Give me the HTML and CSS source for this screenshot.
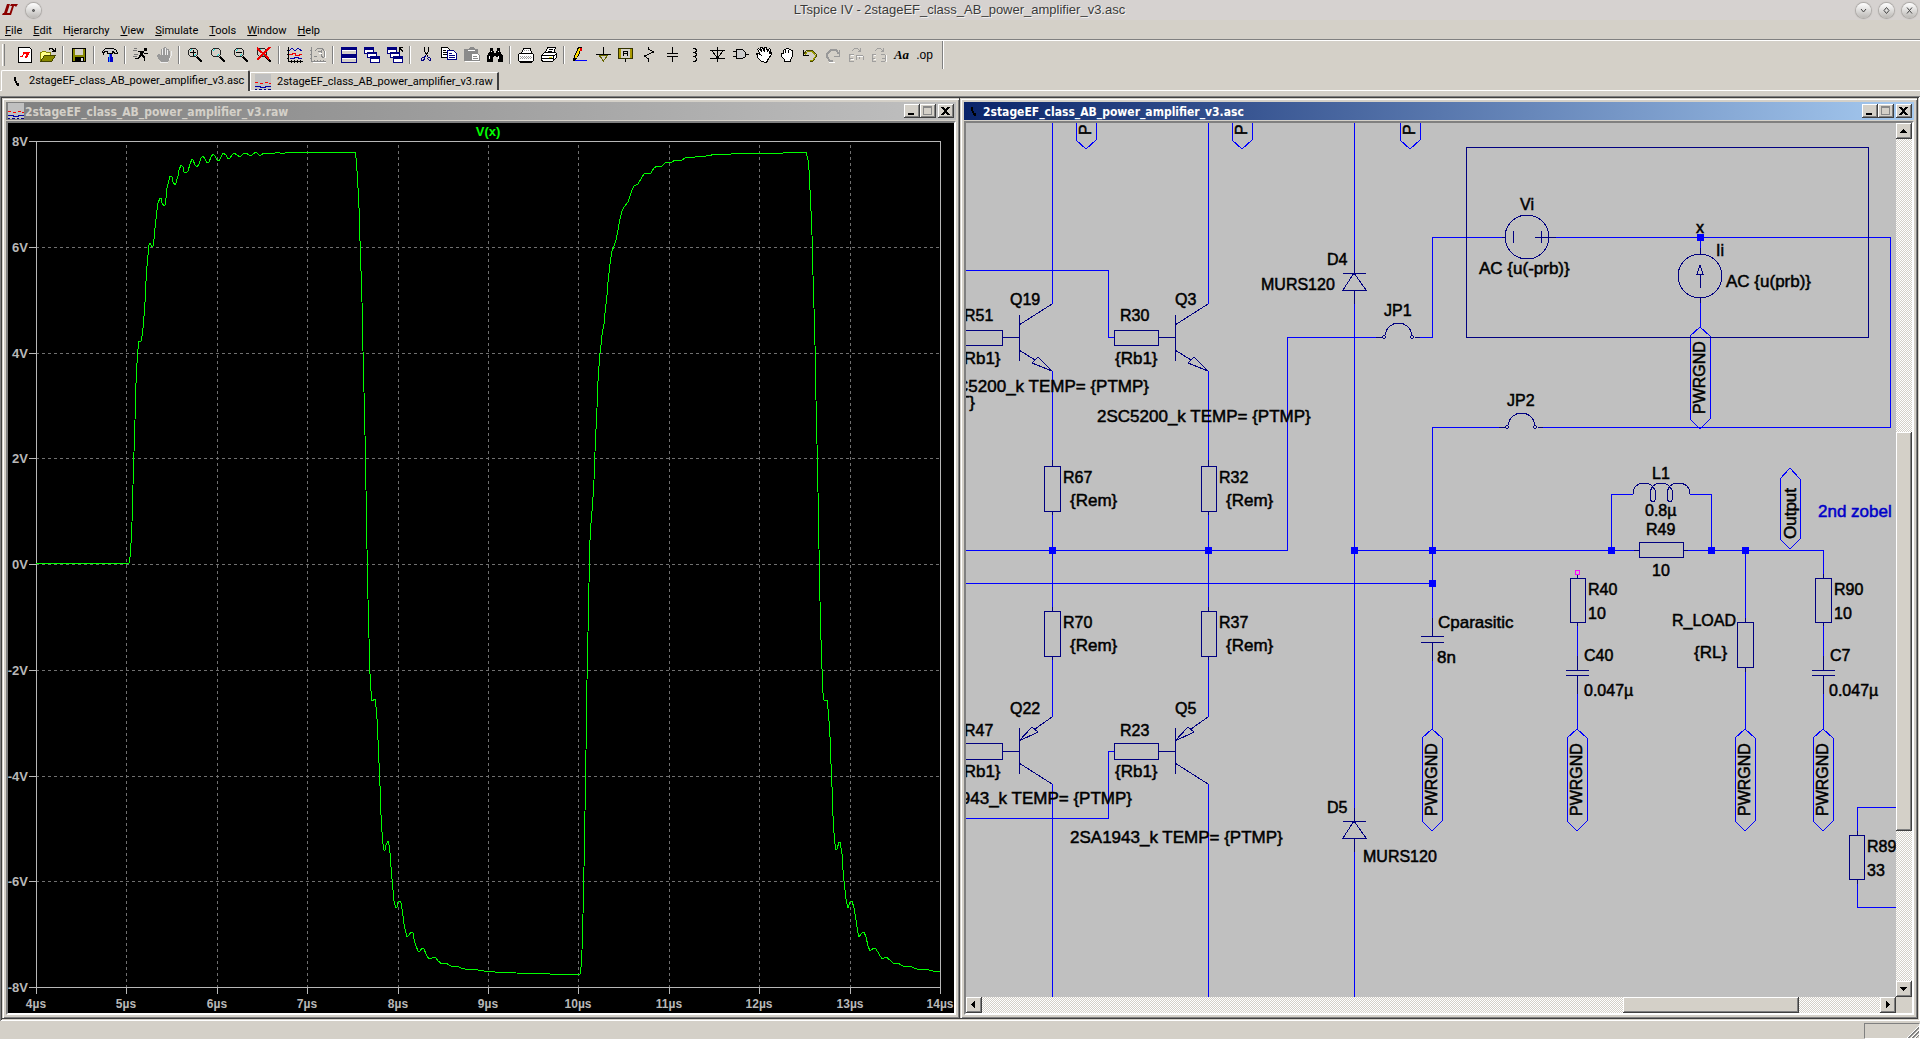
FILE: index.html
```html
<!DOCTYPE html>
<html lang="en">
<head>
<meta charset="utf-8">
<title>LTspice IV - 2stageEF_class_AB_power_amplifier_v3.asc</title>
<link rel="stylesheet" href="styles.css">
</head>
<body>
<header class="titlebar">
  <div class="titlebar-side">
    <svg class="logo" viewBox="0 0 16 12" aria-hidden="true"><path fill="#8b0000" d="M5 0h3L5 9h4l-1 2H0l1-2h1zM9 0h7l-2 3-1-1h-1L9 11H7l3-9H8z"/></svg>
    <button class="orb" aria-label="Window menu"><svg viewBox="0 0 15 15"><circle cx="7.500" cy="7.500" r="1" fill="#777"/></svg></button>
  </div>
  <h1>LTspice IV - 2stageEF_class_AB_power_amplifier_v3.asc</h1>
  <div class="titlebar-side end">
    <button class="orb" aria-label="Minimize"><svg viewBox="0 0 15 15"><path d="M5 6l2.500 3L10 6"/></svg></button>
    <button class="orb" aria-label="Maximize"><svg viewBox="0 0 15 15"><path d="M7.500 4.500l2.500 3-2.500 3-2.500-3z"/></svg></button>
    <button class="orb" aria-label="Close"><svg viewBox="0 0 15 15"><path d="M5 4.500l5 6M10 4.500l-5 6"/></svg></button>
  </div>
</header>

<nav class="menubar">
  <button><u>F</u>ile</button><button><u>E</u>dit</button><button>H<u>i</u>erarchy</button><button><u>V</u>iew</button><button><u>S</u>imulate</button><button><u>T</u>ools</button><button><u>W</u>indow</button><button><u>H</u>elp</button>
</nav>

<div class="toolbar" role="toolbar">
  <button aria-label="New schematic"><svg viewBox="0 0 16 16"><path d="M1.500.5h11l2 2v13h-13z" fill="#fff" stroke="#000"/><path d="M6 5h7l-1 2-2 4H8l1-4H7l-1 3H3V9h2l1-2z" fill="#f00"/></svg></button>
  <button aria-label="Open"><svg viewBox="0 0 16 16"><path d="M.5 14.500v-9h1l1-1h3l1 1h4v3" fill="#ff8" stroke="#880"/><path d="M.5 14.500l4-6h11l-4 6z" fill="#880" stroke="#440"/><path d="M8.500 2.500h1v-1h3v1h1v1h1M15.500 1v3.500H12" fill="none" stroke="#000"/></svg></button>
  <span class="sep"></span>
  <button aria-label="Save"><svg viewBox="0 0 16 16"><path d="M1.500 1.500h13v13h-13z" fill="#880" stroke="#000"/><path d="M4 2h8v6H4z" fill="#d4d0c8"/><path d="M4 10h9v5H4z" fill="#000"/><path d="M10 11h2v3h-2z" fill="#ddd"/></svg></button>
  <span class="sep"></span>
  <button aria-label="Control panel"><svg viewBox="0 0 16 16"><path d="M.5 4.500l3-3h8l3 2 1 3h-3l-1-2h-1v2h-5v-2h-3l-1 2z" fill="#ccc" stroke="#000"/><path d="M7 7h3v3h1v5H6v-5h1z" fill="#00c"/><path d="M7 7h1v8H7z" fill="#39f"/></svg></button>
  <span class="sep"></span>
  <button aria-label="Run"><svg viewBox="0 0 16 16"><path d="M11 1h3v3h-3zM6 4h5v2h-1v2l2 2v4h-1v-3L8 9l-2 3H2v-1h3l2-4V5H5V4zM11 6h4v1h-4z" fill="#000"/><path d="M1 1.500h3M0 3.500h4M1 7.500h4M0 9.500h4" stroke="#777"/></svg></button>
  <button aria-label="Halt" disabled><svg viewBox="0 0 16 16"><path d="M5 15L2 11 1 8l2-1 2 2V2h1.500V1H8V0h1.500v1H11v1h1.500v2H14v7l-2 4z" fill="#999"/><path d="M6.500 2v6M9 1v7M11.500 3v5M4 15.500h8M13 13l2-4V4" stroke="#eee" fill="none"/></svg></button>
  <span class="sep"></span>
  <button aria-label="Zoom in"><svg viewBox="0 0 16 16"><use href="#lens"/><path d="M3 5.500h6M6 3v6" stroke="#000"/></svg></button>
  <button aria-label="Zoom"><svg viewBox="0 0 16 16"><g id="lens"><circle cx="6" cy="5.500" r="4.500" fill="none" stroke="#222"/><path d="M3 4l2-2M7 9l2-2" stroke="#0dd" stroke-width="1"/><path d="M10 10l5 5" stroke="#000" stroke-width="2"/></g></svg></button>
  <button aria-label="Zoom out"><svg viewBox="0 0 16 16"><use href="#lens"/><path d="M3 5.500h6" stroke="#000"/></svg></button>
  <button aria-label="Zoom to fit"><svg viewBox="0 0 16 16"><use href="#lens"/><path d="M1 1l12 11M14 0L1 13" stroke="#e00" stroke-width="2"/></svg></button>
  <span class="sep"></span>
  <button aria-label="Autorange"><svg viewBox="0 0 16 16"><path d="M1.500 0v14.500H16M4 13v3M7 13v3M10 13v3M13 13v3M0 3.500h2M0 7.500h2M0 11.500h2" stroke="#000" fill="none"/><path d="M2 4l3-3 3 3 3-3 4 3" stroke="#00a" fill="none"/><path d="M2 7.500h3v-1h3v2h4v-1h3" stroke="#e00" fill="none"/><path d="M3 11.500h4v-1h4v1h4" stroke="#00a" fill="none"/></svg></button>
  <button aria-label="Plot settings" disabled><svg viewBox="0 0 16 16"><path d="M1.500 0v14.500H16M4 13v3M7 13v3M10 13v3M13 13v3M0 3.500h2M0 7.500h2M0 11.500h2M5 4l3-3h4l2 3v6M8 5l3-1v5l3 2M4 9h3" stroke="#8a8a8a" fill="none"/><path d="M3 15.500h13M9 6h3M15.500 4v7" stroke="#fff"/></svg></button>
  <span class="sep"></span>
  <button aria-label="Tile windows"><svg viewBox="0 0 16 16"><path d="M.5.500h15v7H.5zM.5 8.500h15v7H.5z" fill="#d4d0c8" stroke="#000080"/><path d="M1 1h14v2H1zM1 9h14v2H1z" fill="#000080"/><path d="M1 3h14v1H1zM1 11h14v1H1z" fill="#fff"/></svg></button>
  <button aria-label="Cascade windows"><svg viewBox="0 0 16 16"><g id="cascade" fill="#fff" stroke="#000080"><path d="M.5.500h9v6h-9zM3.500 5h9v5h-9zM6.500 9h9v6h-9z"/><path d="M1 2h9M3 6h10M6 10.500h10" stroke-width="2"/></g></svg></button>
  <button aria-label="Close windows"><svg viewBox="0 0 16 16"><use href="#cascade"/><path d="M12.500 5V.5H16M13 1l3 4" stroke="#000" fill="none"/></svg></button>
  <span class="sep"></span>
  <button aria-label="Cut"><svg viewBox="0 0 16 16"><path d="M6.500 0v4l3 5M10.500 0v4l-3 5" stroke="#000" fill="none"/><path d="M4.500 10.500h2l1-2M4.500 10.500l-1 1v2h2l1-2v-1M9.500 9l1 1.500h1l1 1v2h-1l-2-2v-1" stroke="#000080" fill="none"/></svg></button>
  <button aria-label="Copy"><svg viewBox="0 0 16 16"><path d="M.5.500h6l3 3v7h-9z" fill="#fff" stroke="#000"/><path d="M2 3.500h3M2 5.500h5M2 7.500h5" stroke="#000"/><path d="M6.500 3.500h6l3 3v6h-9z" fill="#fff" stroke="#000080"/><path d="M8 8.500h6M8 10.500h6M8 6.500h3" stroke="#000080"/></svg></button>
  <button aria-label="Paste" disabled><svg viewBox="0 0 16 16"><path d="M0 2h4l2-2h3l2 2h3v5H7v7H0z" fill="#8a8a8a"/><path d="M7.500 6.500h6l2 2v5h-8z" fill="#fff" stroke="#8a8a8a"/><path d="M9 9.500h4M9 11.500h5" stroke="#8a8a8a"/><path d="M4 3.500h7M1 14.500h15" stroke="#fff"/></svg></button>
  <button aria-label="Find"><svg viewBox="0 0 16 16"><path d="M3 1h3v3h1v2h2V4h1V1h3v3l3 5v6h-5v-5H9v-1H7v1H6v5H0V9l3-5z" fill="#000"/><path d="M4.500 4v1M11.500 4v1M2.500 9v3M11.500 9v3" stroke="#fff"/></svg></button>
  <span class="sep"></span>
  <button aria-label="Print preview"><svg viewBox="0 0 16 16"><path d="M3.500 6.500l2-5h7l1 5" fill="#fff" stroke="#000"/><path d="M.5 7.500l1-1h13l1 1v6l-1 1h-13l-1-1z" fill="#fff" stroke="#000"/><path d="M2 9.500h12M2 11.500h12" stroke="#999" stroke-dasharray="1 1"/><path d="M3 10.500h12M6 3.500h5" stroke="#999" stroke-dasharray="1 1"/><path d="M2 14.500h12" stroke="#000" stroke-width="2"/></svg></button>
  <button aria-label="Print"><svg viewBox="0 0 16 16"><path d="M4.500 5.500l2-5h8l-2 6" fill="#fff" stroke="#000"/><path d="M.5 8.500l3-3h11l1 1v4l-4 4h-10l-1-2z" fill="#fff" stroke="#000"/><path d="M1 8.500h11M1 11.500h11M12.500 8v6M8 2.500h4M7 4.500h4M13 9l2-2" stroke="#000"/><path d="M8 10h3" stroke="#dd0"/></svg></button>
  <span class="sep"></span>
  <button aria-label="Wire"><svg viewBox="0 0 16 16"><path d="M6.500.5h3l-4 10-4 3 1-4z" fill="#fd0" stroke="#000"/><path d="M8 1h2v3H8z" fill="#e00"/><path d="M1 13.500h14" stroke="#00f"/><path d="M1 11h2v3H1z"/></svg></button>
  <button aria-label="Ground"><svg viewBox="0 0 16 16"><path d="M8.500 0v7M1 7.500h15" stroke="#000"/><path d="M4 8l4.500 6L13 8z" fill="#d4d0c8" stroke="#660"/></svg></button>
  <button aria-label="Label net"><svg viewBox="0 0 16 16"><path d="M.5 1.500h14v10H.5z" fill="#d4d0c8" stroke="#330"/><path d="M2 2v9M13 2v9" stroke="#a90" stroke-width="2"/><path d="M7.500 12v3M5.500 9V4.500h4V9M6 6.500h3" stroke="#000" fill="none"/></svg></button>
  <button aria-label="Resistor"><svg viewBox="0 0 16 16"><path d="M7.500 0v2l5 3-9 4 4 3v3" stroke="#000" fill="none"/></svg></button>
  <button aria-label="Capacitor"><svg viewBox="0 0 16 16"><path d="M8.500 0v6M3 6.500h11M3 9.500h11M8.500 10v5" stroke="#000"/></svg></button>
  <button aria-label="Inductor"><svg viewBox="0 0 16 16"><path d="M6 1.500h2q3 2 0 4H6h2q3 2 0 4H6h2q3 3 0 5H6" stroke="#000" fill="none"/></svg></button>
  <button aria-label="Diode"><svg viewBox="0 0 16 16"><path d="M7.500 0v15M0 3.500h15M0 11.500h15M2 4l5.500 7L13 4" stroke="#000" fill="none"/></svg></button>
  <button aria-label="Component"><svg viewBox="0 0 16 16"><path d="M0 4.500h3M0 9.500h3M13 7.500h3M3.500 2.500h6l3 3v4l-3 2h-6z" stroke="#000" fill="#ccc"/></svg></button>
  <button aria-label="Move"><svg viewBox="0 0 16 16"><path d="M5.500 14.500l-4-4v-2l-1-2h2l2 1-3-5 1-1 3 3-1-4h2l2 4V.5h2l1 4 2-3 1 1-1 4 2-1v2l-3 4-2 4z" fill="#fff" stroke="#000"/></svg></button>
  <button aria-label="Drag"><svg viewBox="0 0 16 16"><path d="M5.500 14.500v-2l-3-3v-3h2v-3l1-1h1l1-1h2l1 1h1l1 1h1v6l-2 3v2z" fill="#fff" stroke="#000"/><path d="M6.500 3v3M9.500 3v3" stroke="#000"/></svg></button>
  <button aria-label="Undo"><svg viewBox="0 0 16 16"><path d="M2 7l3-4h5l4 4v3l-3 4H8" fill="none" stroke="#440"/><path d="M3 8l3-4h4l3 4v2l-2 3H8" fill="none" stroke="#990"/><path d="M1.500 3v5H7" fill="none" stroke="#000"/></svg></button>
  <button aria-label="Redo" disabled><svg viewBox="0 0 16 16"><path d="M14 7l-3-4H6L2 7v3l3 4h3" fill="none" stroke="#999" stroke-width="2"/><path d="M14.500 3v6H9" fill="none" stroke="#999"/><path d="M4 15.500h6" stroke="#fff"/></svg></button>
  <button aria-label="Rotate" disabled><svg viewBox="0 0 18 16"><path d="M4 3.500l3-3h4l3 3M14.500 0v4H11M1 7.500h6M1 11.500h5M1 15h6M2 8v7M9 8.500h8M9.500 9v5M13 9v4M17 9v5" stroke="#999" fill="none"/><path d="M3 12.500h4M3 8.500h4M10 9.500h7" stroke="#fff"/></svg></button>
  <button aria-label="Mirror" disabled><svg viewBox="0 0 18 16"><path d="M4 3.500l3-3h4l3 3M14.500 0v4H11M1 7.500h5M1 11.500h4M1 15h5M2 8v7M11 7.500h5M12 11.500h4M11 15h5M16 8v7" stroke="#999" fill="none"/><path d="M3 12.500h3M3 8.500h3M17.500 8v8" stroke="#fff"/></svg></button>
  <button class="glyph-text">Aa</button>
  <button class="glyph-op">.op</button>
  <span class="toolbar-end"></span>
</div>

<div class="tabs" role="tablist">
  <button class="tab active" role="tab" aria-selected="true"><svg viewBox="0 0 16 16"><path d="M7 4h2v4h1v2h2v3h-2v-1H9v-2H8V8H7z"/></svg>2stageEF_class_AB_power_amplifier_v3.asc</button>
  <button class="tab" role="tab" aria-selected="false"><svg viewBox="0 0 16 16"><g id="wave"><path d="M0 0h16v16H0z" fill="#c0c0c0"/><path d="M0 8.500h3M5 9.500h3M10 8.500h3M14 9.500h2" stroke="#f00"/><path d="M0 12.500h5v1h5v-1h6" stroke="#00a" fill="none"/><path d="M0 15.500h2M4 15.500h3M9 15.500h2M13 15.500h3" stroke="#000080"/></g></svg>2stageEF_class_AB_power_amplifier_v3.raw</button>
</div>

<main class="workspace">
  <section class="window">
    <div class="caption">
      <svg class="caption-icon" viewBox="0 0 16 16"><use href="#wave"/></svg>
      <h2>2stageEF_class_AB_power_amplifier_v3.raw</h2>
      <button class="cap" aria-label="Minimize"><svg viewBox="0 0 12 10"><path d="M2 8h6" stroke="#000" stroke-width="2"/></svg></button>
      <button class="cap" aria-label="Maximize"><svg viewBox="0 0 12 10"><path d="M1.500.5h8v8h-8zM1 1.500h9" stroke="#888" fill="none"/></svg></button>
      <button class="cap close" aria-label="Close"><svg viewBox="0 0 12 10"><path d="M2 1l7 8M9 1L2 9" stroke="#000" stroke-width="2"/></svg></button>
    </div>
    <div class="client plot">
      <svg class="canvas" viewBox="8 123 946 890" preserveAspectRatio="xMinYMin slice" role="img" aria-label="V(x) waveform">
        <g class="grid"><path d="M126 145V987M217 145V987M307 145V987M398 145V987M488 145V987M578 145V987M669 145V987M759 145V987M850 145V987M36 247H940M36 353H940M36 458H940M36 564H940M36 670H940M36 776H940M36 881H940"/></g>
        <path class="axis" d="M36 141H940V987H36ZM29 141H36M29 247H36M29 353H36M29 458H36M29 564H36M29 670H36M29 776H36M29 881H36M29 987H36M36 987V994M126 987V994M217 987V994M307 987V994M398 987V994M488 987V994M578 987V994M669 987V994M759 987V994M850 987V994M940 987V994"/>
        <polyline class="trace" points="36,563 129,563 130,557 131,543 132,522 133,485 134,452 135,420 136,383 137,363 138,349 139,341 141,341 142,336 143,328 144,316 145,302 146,281 147,266 148,255 149,245 150,243 152,247 153,246 154,239 155,228 156,219 157,210 158,203 160,198 161,198 162,203 164,206 165,205 166,198 167,188 169,180 170,176 172,177 173,182 175,185 176,183 178,176 179,170 181,165 183,167 184,172 186,173 188,171 190,164 192,159 193,160 195,165 197,167 199,164 201,158 203,156 205,159 207,163 209,162 211,157 213,154 215,156 217,160 219,161 221,157 223,153 226,155 228,159 230,158 232,155 234,153 237,155 240,157 243,154 246,153 249,155 251,156 253,154 256,152 259,155 261,155 264,153 268,153 272,154 275,153 277,152 280,153 283,154 287,152 295,153 301,152 307,153 312,152 317,153 323,152 327,153 333,152 335,153 338,152 355,152 356,158 357,171 358,188 359,208 360,241 361,271 362,302 363,351 364,392 365,435 366,490 367,549 368,599 369,638 370,674 371,691 372,701 375,699 376,707 377,719 378,740 379,763 380,786 381,815 382,832 383,844 384,850 385,850 386,845 388,841 389,845 390,853 391,867 392,879 393,890 394,901 396,908 397,907 398,902 400,901 401,903 402,909 403,916 404,924 406,933 407,937 409,935 411,932 413,933 414,939 416,946 418,951 420,951 422,948 424,949 426,954 429,959 432,958 434,957 436,958 438,961 442,964 446,963 449,965 453,967 457,966 461,968 465,969 472,969 484,971 495,972 516,973 550,974 579,975 580,974 581,967 582,950 583,914 584,867 585,811 586,751 587,680 588,632 589,583 590,540 591,523 592,511 593,497 594,480 595,452 596,429 597,408 598,381 599,366 600,353 601,345 602,335 604,324 605,313 606,304 607,295 608,282 609,273 610,264 612,251 614,246 616,240 618,230 620,219 622,211 624,207 628,202 630,196 632,190 634,186 638,184 641,179 644,174 651,173 654,168 657,166 661,167 666,162 671,163 675,160 682,160 687,157 693,158 697,156 706,156 717,154 724,155 738,153 746,154 748,153 783,153 791,152 806,152 808,160 809,170 810,190 811,211 812,235 813,275 814,308 815,345 816,400 817,444 818,492 819,549 820,601 821,640 822,669 823,693 824,700 827,700 828,709 829,721 830,737 831,764 832,787 833,816 834,833 835,844 836,850 837,849 839,842 840,842 841,848 842,854 843,870 844,881 846,899 848,908 850,902 852,901 854,908 856,920 858,933 859,937 862,933 864,932 866,937 868,946 870,951 874,948 876,949 879,954 882,959 886,957 890,960 894,964 898,963 901,965 905,967 909,966 917,969 925,969 933,971 940,972"/>
        <text class="trace-name" x="488" y="136">V(x)</text>
        <g class="volts"><text x="28" y="146">8V</text><text x="28" y="252">6V</text><text x="28" y="358">4V</text><text x="28" y="463">2V</text><text x="28" y="569">0V</text><text x="28" y="675">-2V</text><text x="28" y="781">-4V</text><text x="28" y="886">-6V</text><text x="28" y="992">-8V</text></g>
        <g class="times"><text x="36" y="1008">4µs</text><text x="126" y="1008">5µs</text><text x="217" y="1008">6µs</text><text x="307" y="1008">7µs</text><text x="398" y="1008">8µs</text><text x="488" y="1008">9µs</text><text x="578" y="1008">10µs</text><text x="669" y="1008">11µs</text><text x="759" y="1008">12µs</text><text x="850" y="1008">13µs</text><text x="940" y="1008">14µs</text></g>
      </svg>
    </div>
  </section>

  <section class="window focused">
    <div class="caption">
      <svg class="caption-icon" viewBox="0 0 16 16"><path d="M5 4h2v4h1v2h2v3H8v-1H7v-2H6V8H5z"/></svg>
      <h2>2stageEF_class_AB_power_amplifier_v3.asc</h2>
      <button class="cap" aria-label="Minimize"><svg viewBox="0 0 12 10"><path d="M2 8h6" stroke="#000" stroke-width="2"/></svg></button>
      <button class="cap" aria-label="Maximize"><svg viewBox="0 0 12 10"><path d="M1.500.5h8v8h-8zM1 1.500h9" stroke="#888" fill="none"/></svg></button>
      <button class="cap close" aria-label="Close"><svg viewBox="0 0 12 10"><path d="M2 1l7 8M9 1L2 9" stroke="#000" stroke-width="2"/></svg></button>
    </div>
    <div class="client schematic">
      <svg class="canvas" viewBox="966 123 930 874" preserveAspectRatio="xMinYMin slice" role="img" aria-label="Amplifier schematic">
        <defs>
          <path id="flag" d="M0 0L10 9V92L0 102L-10 92V9Z"/>
          <path id="flag-end" d="M-10 -26V-9L0 0L10 -9V-26"/>
          <path id="npn" d="M-33 11V57M-33 21L0 0M-33 46L-17 56M0 67L-14 53L-20 59Z"/>
          <path id="pnp" d="M-33 11V57M-33 46L0 67M-17 12L0 0M-33 24L-20 10L-14 15Z"/>
          <path id="diode" d="M0 -13V0M-11 0H12M0 0L12 17H-11ZM0 17V31"/>
          <path id="jumper" d="M-22 0H-16M-13 -2C-10 -18 11 -18 14 -2M17 0H22M-14 -2L-12 0L-14 2L-16 0ZM14 -2L16 0L14 2L12 0Z"/>
        </defs>
        <path class="wire" d="M1052 123V304M1208 123V304M966 270H1108V337H1114M1052 371V460M1208 371V460M1052 515V607M1208 515V607M1052 660V717M1208 660V717M1052 784V997M1208 784V997M966 550H1287V337H1379M966 583H1432M966 818H1108V751H1114M1354 123V260M1354 304V808M1354 851V997M1419 337H1432V237H1502M1556 237H1890V427H1543M1499 427H1432V618M1354 550H1634M1688 550H1823V574M1611 550V494H1633M1690 494H1711V550M1432 661V729M1577 626V656M1577 694V729M1745 550V618M1745 672V729M1823 626V656M1823 694V729M1700 237V248M1700 303V327M1896 807H1857V831M1857 884V907H1896"/>
        <g class="flags"><use href="#flag" x="1432" y="729"/><use href="#flag" x="1577" y="729"/><use href="#flag" x="1745" y="729"/><use href="#flag" x="1823" y="729"/><use href="#flag" x="1700" y="327"/><path d="M1790 468L1800 479V539L1790 549L1780 539V479Z"/><use href="#flag-end" x="1086" y="149"/><use href="#flag-end" x="1242" y="149"/><use href="#flag-end" x="1410" y="149"/></g>
        <g class="part">
          <use href="#npn" x="1052" y="304"/><use href="#npn" x="1208" y="304"/><use href="#pnp" x="1052" y="717"/><use href="#pnp" x="1208" y="717"/>
          <path d="M966 330H1002V345H966M1114 330H1158V345H1114ZM966 743H1002V759H966M1114 743H1158V759H1114ZM1002 337H1019M1158 337H1175M1002 751H1019M1158 751H1175"/>
          <path d="M1044 466H1060V511H1044ZM1201 466H1216V511H1201ZM1044 611H1060V656H1044ZM1201 611H1216V656H1201ZM1052 460V466M1208 460V466M1052 511V515M1208 511V515M1052 607V611M1208 607V611M1052 656V660M1208 656V660"/>
          <use href="#diode" x="1354" y="273"/><use href="#diode" x="1354" y="821"/>
          <use href="#jumper" x="1398" y="337"/><use href="#jumper" x="1521" y="427"/>
          <path d="M1466 147H1868V337H1466Z"/>
          <circle cx="1527" cy="237" r="22"/><circle cx="1700" cy="276" r="22"/>
          <path d="M1502 237H1505M1513 231V243M1541 231V243M1535 237H1556M1700 248V254M1700 298V303M1700 288V274M1700 265L1703 274H1697Z"/>
          <path d="M1633 494C1633 487 1638 483 1644 483C1652 483 1656 489 1656 495C1656 500 1654 502 1653 502C1651 502 1650 499 1650 495C1650 488 1654 483 1661 483C1669 483 1673 489 1673 495C1673 500 1671 502 1670 502C1668 502 1667 499 1667 495C1667 488 1671 483 1678 483C1685 483 1690 487 1690 494"/>
          <path d="M1634 550H1639M1683 550H1688M1639 542H1683V557H1639Z"/>
          <path d="M1432 618V636M1421 636H1444M1421 642H1444M1432 642V661M1577 574V578M1570 578H1585V622H1570ZM1577 622V626M1577 656V670M1566 670H1589M1566 675H1589M1577 675V694M1823 574V578M1815 578H1831V622H1815ZM1823 622V626M1823 656V670M1812 670H1835M1812 675H1835M1823 675V694M1745 618V622M1737 622H1753V667H1737ZM1745 667V672M1857 831V835M1849 835H1864V879H1849ZM1857 879V884"/>
        </g>
        <path class="open-end" d="M1575 570H1579V574H1575Z"/>
        <path class="node" d="M1049 547h7v7h-7zM1205 547h7v7h-7zM1351 547h7v7h-7zM1429 547h7v7h-7zM1429 580h7v7h-7zM1608 547h7v7h-7zM1708 547h7v7h-7zM1742 547h7v7h-7zM1697 234h7v7h-7z"/>
        <g class="name">
          <text x="1010" y="305">Q19</text><text x="1175" y="305">Q3</text><text x="964" y="321">R51</text><text x="1120" y="321">R30</text>
          <text x="1327" y="265">D4</text><text x="1261" y="290">MURS120</text><text x="1384" y="316">JP1</text><text x="1507" y="406">JP2</text>
          <text x="1063" y="483">R67</text><text x="1219" y="483">R32</text><text x="1063" y="628">R70</text><text x="1219" y="628">R37</text>
          <text x="1010" y="714">Q22</text><text x="1175" y="714">Q5</text><text x="964" y="736">R47</text><text x="1120" y="736">R23</text>
          <text x="1327" y="813">D5</text><text x="1363" y="862">MURS120</text>
          <text x="1520" y="210">Vi</text><text x="1696" y="233">x</text><text x="1716" y="256">Ii</text>
          <text x="1652" y="479">L1</text><text x="1645" y="516">0.8µ</text><text x="1646" y="535">R49</text><text x="1652" y="576">10</text>
          <text x="1588" y="595">R40</text><text x="1588" y="619">10</text><text x="1584" y="661">C40</text><text x="1584" y="696">0.047µ</text>
          <text x="1672" y="626">R_LOAD</text><text x="1834" y="595">R90</text><text x="1834" y="619">10</text><text x="1830" y="661">C7</text><text x="1829" y="696">0.047µ</text>
          <text x="1867" y="852">R89</text><text x="1867" y="876">33</text>
          <text transform="translate(1091 135) rotate(-90)">P</text><text transform="translate(1247 135) rotate(-90)">P</text><text transform="translate(1415 135) rotate(-90)">P</text>
          <text transform="translate(1705 414) rotate(-90)">PWRGND</text><text transform="translate(1437 816) rotate(-90)">PWRGND</text><text transform="translate(1582 816) rotate(-90)">PWRGND</text><text transform="translate(1750 816) rotate(-90)">PWRGND</text><text transform="translate(1828 816) rotate(-90)">PWRGND</text>
        </g>
        <g class="value">
          <text x="958" y="364">{Rb1}</text><text x="1115" y="364">{Rb1}</text><text x="958" y="777">{Rb1}</text><text x="1115" y="777">{Rb1}</text>
          <text x="1070" y="506">{Rem}</text><text x="1226" y="506">{Rem}</text><text x="1070" y="651">{Rem}</text><text x="1226" y="651">{Rem}</text>
          <text class="to-right" x="1149" y="392">2SC5200_k TEMP= {PTMP}</text><text class="to-right" x="975" y="408">T}</text><text x="1097" y="422">2SC5200_k TEMP= {PTMP}</text>
          <text class="to-right" x="1132" y="804">2SA1943_k TEMP= {PTMP}</text><text x="1070" y="843">2SA1943_k TEMP= {PTMP}</text>
          <text x="1479" y="274">AC {u(-prb)}</text><text x="1726" y="287">AC {u(prb)}</text>
          <text x="1438" y="628">Cparasitic</text><text x="1437" y="663">8n</text><text x="1694" y="658">{RL}</text>
          <text transform="translate(1796 539) rotate(-90)">Output</text>
          <text class="note" x="1818" y="517">2nd zobel</text>
        </g>
      </svg>
      <div class="scroll vertical">
        <button aria-label="Scroll up"><svg viewBox="0 0 8 8"><path d="M0 6h7L3.500 2z"/></svg></button>
        <span class="v-before"></span><span class="thumb v-thumb"></span><span class="v-after"></span>
        <button aria-label="Scroll down"><svg viewBox="0 0 8 8"><path d="M0 2h7L3.500 6z"/></svg></button>
      </div>
      <div class="scroll horizontal">
        <button aria-label="Scroll left"><svg viewBox="0 0 8 8"><path d="M5 0v7L1 3.500z"/></svg></button>
        <span class="h-before"></span><span class="thumb h-thumb"></span><span class="h-after"></span>
        <button aria-label="Scroll right"><svg viewBox="0 0 8 8"><path d="M2 0v7l4-3.500z"/></svg></button>
      </div>
    </div>
  </section>
</main>

<footer class="statusbar"><div class="pane"><svg viewBox="0 0 12 12"><path d="M0 12L12 0M4 12l8-8M8 12l4-4" stroke="#fff"/><path d="M1 12L12 1M2 12L12 2M5 12l7-7M6 12l6-6M9 12l3-3" stroke="#808080"/></svg></div></footer>
</body>
</html>
```
FILE: styles.css
```css
:root {
  --face: #d4d0c8;
  --shadow: #808080;
  --dark: #404040;
  --ui: Roboto, "Liberation Sans", sans-serif;
}
* { box-sizing: border-box; }
body {
  margin: 0;
  height: 100vh;
  display: flex;
  flex-direction: column;
  overflow: hidden;
  background: var(--face);
  font: 11px/14px var(--ui);
  color: #000;
}
button { margin: 0; padding: 0; border: 0; background: none; font: inherit; color: inherit; }
h1, h2 { margin: 0; font-weight: normal; }
svg { display: block; }

/* outer window title */
.titlebar {
  display: flex;
  align-items: center;
  flex: none;
  height: 20px;
  padding: 0 3px 0 2px;
  background: #d6d2d0;
}
.titlebar h1 {
  font: 13px/20px "Liberation Sans", Arial, sans-serif;
  color: #3a3a3a;
  text-shadow: 1px 1px 0 #f4f2f0;
}
.titlebar-side { display: flex; flex: 1; gap: 8px; align-items: center; }
.titlebar-side.end { justify-content: flex-end; }
.logo { width: 16px; height: 12px; }
.orb {
  width: 15px;
  height: 15px;
  border-radius: 50%;
  background: linear-gradient(#fff, #bbb8b5);
  box-shadow: 0 0 1px 1px #a9a6a3;
}
.orb svg { width: 15px; height: 15px; fill: none; stroke: #444; }

.menubar {
  display: flex;
  flex: none;
  height: 20px;
  border-bottom: 1px solid var(--shadow);
}
.menubar button { padding: 2px 6px 0 5px; }

/* tool bar */
.toolbar {
  display: flex;
  align-items: center;
  flex: none;
  height: 30px;
  border-top: 1px solid #fff;
  padding: 0 0 1px 13px;
  background: linear-gradient(90deg, transparent 2px, #fff 2px 3px, transparent 3px 4px, var(--shadow) 4px 5px, transparent 5px) 0 3px / 100% 22px no-repeat;
}
.toolbar button { display: grid; place-items: center; width: 23px; height: 22px; flex: none; }
.toolbar svg { width: 16px; height: 16px; shape-rendering: crispEdges; }
.sep {
  width: 2px;
  height: 18px;
  margin: 0 3px;
  flex: none;
  border-left: 1px solid var(--shadow);
  border-right: 1px solid #fff;
}
.toolbar .glyph-text { font: italic bold 13px/16px "Liberation Serif", serif; }
.toolbar .glyph-op { font: 12px/14px "Liberation Sans", sans-serif; }
.toolbar-end { align-self: stretch; width: 2px; margin-left: 6px; border-left: 1px solid var(--shadow); border-right: 1px solid #fff; }

/* document tabs */
.tabs {
  display: flex;
  align-items: flex-start;
  flex: none;
  height: 26px;
  padding-left: 1px;
  background: linear-gradient(#fff, #fff) 0 20px / 100% 1px no-repeat;
}
.tab {
  display: flex;
  align-items: center;
  gap: 6px;
  width: 249px;
  height: 18px;
  margin-top: 2px;
  padding-left: 4px;
  border: 1px solid #fff;
  border-right: 2px solid var(--dark);
  border-bottom: 0;
  background: var(--face);
  white-space: nowrap;
}
.tab.active { height: 21px; margin-top: 0; padding: 0 0 1px 5px; border-radius: 2px 2px 0 0; }
.tab svg { width: 16px; height: 16px; flex: none; shape-rendering: crispEdges; }

/* MDI area */
.workspace {
  display: flex;
  flex: 1;
  min-height: 0;
  padding: 2px;
  box-shadow: inset 1px 1px var(--shadow), inset -1px -1px #fff, inset 2px 2px var(--dark);
}
.window {
  display: flex;
  flex-direction: column;
  flex: 1;
  min-width: 0;
  padding: 4px;
  background: var(--face);
  box-shadow: inset -1px -1px var(--dark), inset 1px 1px var(--face), inset 2px 2px #fff, inset -2px -2px var(--shadow);
}
.caption {
  display: flex;
  align-items: center;
  flex: none;
  height: 18px;
  margin-bottom: 1px;
  padding: 0 0 0 2px;
  background: linear-gradient(90deg, #808080, #c0c0c0);
  color: var(--face);
}
.focused .caption { background: linear-gradient(90deg, #0a246a, #a6caf0); color: #fff; }
.caption-icon { width: 16px; height: 16px; shape-rendering: crispEdges; }
.caption h2 { flex: 1; padding: 2px 0 0 1px; font: bold 12px/16px "DejaVu Sans Condensed", "DejaVu Sans", sans-serif; white-space: nowrap; }
.cap, .scroll button, .thumb {
  background: var(--face);
  box-shadow: inset -1px -1px var(--dark), inset 1px 1px #fff, inset -2px -2px var(--shadow);
}
.cap { width: 16px; height: 14px; padding: 2px; flex: none; color: #000; }
.cap svg { width: 12px; height: 10px; shape-rendering: crispEdges; }
.cap.close { margin: 0 2px; }
.client {
  flex: 1;
  min-height: 0;
  border: 2px solid;
  border-color: var(--shadow) #fff #fff var(--shadow);
}
.canvas { width: 100%; height: 100%; min-height: 0; min-width: 0; }
.plot { background: #000; }

/* waveform */
.grid, .axis, .trace, .wire, .flags, .part, .node, .open-end { fill: none; stroke-width: 1; shape-rendering: crispEdges; }
.grid { stroke: #707070; stroke-dasharray: 3 3; }
.axis { stroke: #b8b8b8; }
.trace { stroke: #00ff00; }
.plot text { font: bold 13px "Liberation Sans", Arial, sans-serif; fill: #b8b8b8; }
.plot .trace-name { fill: #00ff00; text-anchor: middle; }
.volts { text-anchor: end; }
.times { text-anchor: middle; }
.plot .times text { font-size: 12px; }

/* schematic */
.schematic { display: grid; grid-template: minmax(0, 1fr) 16px / minmax(0, 1fr) 16px; background: #c0c0c0; }
.wire, .flags { stroke: #0000ff; }
.part { stroke: #000080; }
.node { fill: #0000ff; }
.open-end { stroke: #ff00ff; }
.name text, .value text { font: 16px "Liberation Sans", Arial, sans-serif; fill: #000; stroke: #000; stroke-width: .5; }
.value text { font-size: 17px; }
.value .note { fill: #0000c8; stroke: #0000c8; }
.to-right { text-anchor: end; }

.scroll {
  display: flex;
  background: repeating-conic-gradient(#fff 0 25%, var(--face) 0 50%) 0 0 / 2px 2px;
}
.vertical { flex-direction: column; }
.schematic::after { content: ""; grid-area: 2 / 2; background: var(--face); }
.scroll button { width: 16px; height: 16px; padding: 4px; flex: none; }
.scroll svg { width: 8px; height: 8px; shape-rendering: crispEdges; }
.v-before { flex: 293 0 0; }
.v-thumb { flex: 400 0 0; }
.v-after { flex: 150 0 0; }
.h-before { flex: 642 0 0; }
.h-thumb { flex: 176 0 0; }
.h-after { flex: 81 0 0; }

.statusbar { display: flex; justify-content: flex-end; flex: none; height: 18px; padding-top: 2px; }
.pane {
  display: flex;
  justify-content: flex-end;
  align-items: flex-end;
  width: 56px;
  border: 1px solid;
  border-color: var(--shadow) #fff #fff var(--shadow);
}
.pane svg { width: 12px; height: 12px; }
```
